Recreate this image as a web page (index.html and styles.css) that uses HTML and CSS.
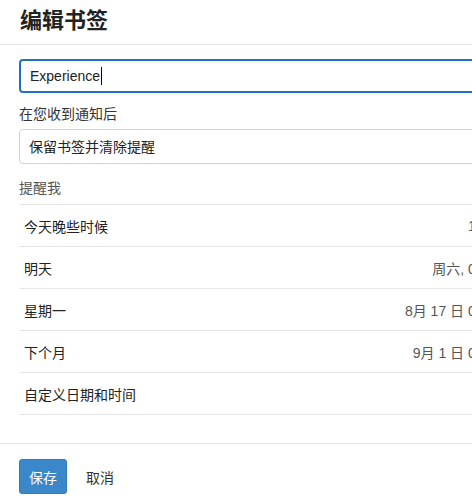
FILE: index.html
```html
<!DOCTYPE html>
<html lang="zh-CN">
<head>
    <meta charset="UTF-8">
    <meta name="viewport" content="width=device-width, initial-scale=1.0">
    <title>编辑书签</title>
    <link rel="stylesheet" href="styles.css">
</head>
<body>
    <div class="bookmark-modal">
        <div class="modal-header">
            <h2 class="modal-title">编辑书签</h2>
        </div>

        <div class="modal-body">
            <div class="bookmark-name">
                <span>Experience</span><span class="caret"></span>
            </div>

            <label class="field-label" for="auto-delete">在您收到通知后</label>
            <select class="bookmark-select" id="auto-delete">
                <option>保留书签并清除提醒</option>
                <option>删除书签</option>
            </select>

            <div class="field-label muted">提醒我</div>
            <ul class="reminder-list">
                <li class="reminder-row">
                    <span>今天晚些时候</span>
                    <span class="reminder-when">18:00</span>
                </li>
                <li class="reminder-row">
                    <span>明天</span>
                    <span class="reminder-when">周六, 08:00</span>
                </li>
                <li class="reminder-row">
                    <span>星期一</span>
                    <span class="reminder-when">8月 17 日 08:00</span>
                </li>
                <li class="reminder-row">
                    <span>下个月</span>
                    <span class="reminder-when">9月 1 日 08:00</span>
                </li>
                <li class="reminder-row">
                    <span>自定义日期和时间</span>
                </li>
            </ul>
        </div>

        <div class="modal-footer">
            <button class="btn-primary" type="button">保存</button>
            <a class="btn-cancel" href="#">取消</a>
        </div>
    </div>
</body>
</html>
```

FILE: styles.css
```css
html, body {
    margin: 0;
    padding: 0;
    background: #fff;
    overflow: hidden;
}
body {
    font-family: "Liberation Sans", "Noto Sans CJK SC", sans-serif;
    font-size: 14px;
    color: #222;
}
.bookmark-modal {
    width: 508px;
    background: #fff;
}
.modal-header {
    padding: 6px 20px 0;
    height: 38px;
    border-bottom: 1px solid #e6e6e6;
}
.modal-title {
    margin: 0;
    font-size: 22px;
    line-height: 29px;
    font-weight: bold;
    color: #222;
}
.modal-body {
    padding: 14px 0 28px 19px;
}
/* text field in its focused state */
.bookmark-name {
    display: flex;
    align-items: center;
    box-sizing: border-box;
    height: 34px;
    margin: 0 0 11px;
    padding: 0 9px;
    border: 2px solid #1f70c1;
    border-radius: 4px;
    color: #222;
}
.caret {
    width: 1px;
    height: 18px;
    margin-left: 1px;
    background: #000;
}
.field-label {
    display: block;
    line-height: 20px;
    margin-bottom: 5px;
    color: #333;
}
.muted {
    color: #555;
    margin-bottom: 6px;
}
.bookmark-select {
    display: block;
    box-sizing: border-box;
    width: 100%;
    height: 35px;
    margin: 0 0 14px;
    padding: 0 9px;
    border: 1px solid #d4d4d4;
    border-radius: 4px;
    background: #fff;
    -webkit-appearance: none;
    appearance: none;
    font-family: inherit;
    font-size: 14px;
    color: #222;
}
.reminder-list {
    list-style: none;
    margin: 0;
    padding: 0;
    border-bottom: 1px solid #e6e6e6;
}
.reminder-row {
    display: flex;
    justify-content: space-between;
    align-items: center;
    height: 41px;
    padding: 0 5px;
    border-top: 1px solid #e6e6e6;
    color: #222;
}
.reminder-when {
    color: #555;
}
.modal-footer {
    display: flex;
    align-items: center;
    gap: 19px;
    padding: 15px 19px;
    border-top: 1px solid #e6e6e6;
}
.btn-primary {
    height: 35px;
    padding: 0 9px;
    border: 1px solid #2f7bbd;
    border-radius: 3px;
    background: #3a87c9;
    color: #fff;
    font-family: inherit;
    font-size: 14px;
}
.btn-cancel {
    color: #333;
    text-decoration: none;
}
```
